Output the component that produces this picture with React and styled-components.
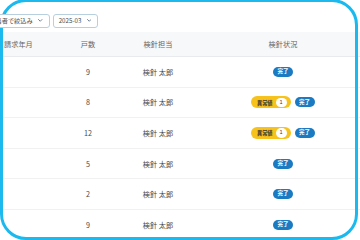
import styled, { createGlobalStyle } from 'styled-components';

const GlobalStyle = createGlobalStyle`
  html, body {
    margin: 0;
    padding: 0;
    background: #fff;
    overflow: hidden;
  }
  body {
    font-family: 'Noto Sans CJK JP', 'Noto Sans', sans-serif;
  }
`;

const Page = styled.div`
  position: relative;
  width: 360px;
  height: 240px;
  overflow: hidden;
  background: #fff;
`;

// cyan rounded frame drawn over the cropped table
const Frame = styled.div`
  position: absolute;
  left: 0;
  top: -1px;
  width: 358px;
  height: 241px;
  box-sizing: border-box;
  border: 3px solid #1cb9ef;
  border-radius: 26px;
  pointer-events: none;
  z-index: 1;
`;

const Toolbar = styled.div`
  position: relative;
  z-index: 2;
  display: flex;
  gap: 3px;
  height: 32px;
  box-sizing: border-box;
  padding-top: 14px;
  margin-left: -29px;
`;

const FilterButton = styled.button`
  display: flex;
  align-items: center;
  gap: 5.5px;
  height: 13.5px;
  box-sizing: border-box;
  padding: 0 6px 0 5px;
  border: 1px solid #b8cfdf;
  border-radius: 3px;
  background: #fff;
  color: #4a4a4a;
  font-family: 'Noto Sans CJK JP', sans-serif;
  font-size: 6.2px;
  line-height: 1;
  white-space: nowrap;
`;

const Chevron = () => (
  <svg width="4.5" height="3" viewBox="0 0 9 6">
    <polyline points="1,1 4.5,4.5 8,1" fill="none" stroke="#51667a" strokeWidth="1.6" strokeLinecap="round" strokeLinejoin="round" />
  </svg>
);

const Table = styled.div`
  width: 360px;
`;

const HeadRow = styled.div`
  display: grid;
  grid-template-columns: 66px 44px 96px 1fr;
  align-items: center;
  height: 25px;
  box-sizing: border-box;
  background: #f7f8fa;
  border-bottom: 1px solid #e8eaed;
  color: #666;
  font-size: 7.2px;
`;

const BodyRow = styled.div`
  display: grid;
  grid-template-columns: 66px 44px 96px 1fr;
  align-items: center;
  height: 30.6px;
  box-sizing: border-box;
  border-bottom: 1px solid #f1f1f1;
  color: #474747;
  font-size: 7.2px;
`;

const Cell = styled.div`
  display: flex;
  align-items: center;
  justify-content: ${p => (p.$left ? 'flex-start' : 'center')};
  gap: 3.5px;
  padding-left: ${p => (p.$left ? '4px' : '0')};
  white-space: nowrap;
`;

const DoneBadge = styled.span`
  display: inline-flex;
  align-items: center;
  justify-content: center;
  height: 10px;
  padding: 0 4.5px;
  border-radius: 5px;
  background: #1a7bc3;
  color: #fff;
  font-size: 5.5px;
  font-weight: 700;
  line-height: 1;
`;

const AlertBadge = styled.span`
  display: inline-flex;
  align-items: center;
  gap: 3px;
  height: 12px;
  padding: 0 4.5px 0 5.5px;
  border-radius: 6px;
  background: #f7c21c;
  color: #333;
  font-size: 5.2px;
  font-weight: 700;
  line-height: 1;
`;

const Count = styled.span`
  display: inline-flex;
  align-items: center;
  justify-content: center;
  width: 11px;
  height: 9.5px;
  border-radius: 5px;
  background: #fff;
  color: #333;
  font-size: 5.6px;
  font-weight: 400;
`;

const rows = [
  { count: 9, alert: 0 },
  { count: 8, alert: 1 },
  { count: 12, alert: 1 },
  { count: 5, alert: 0 },
  { count: 2, alert: 0 },
  { count: 9, alert: 0 },
];

export default function App() {
  return (
    <Page>
      <GlobalStyle />
      <Toolbar>
        <FilterButton>
          検針担当者で絞込み
          <Chevron />
        </FilterButton>
        <FilterButton>
          2025-03
          <Chevron />
        </FilterButton>
      </Toolbar>
      <Table>
        <HeadRow>
          <Cell $left>請求年月</Cell>
          <Cell>戸数</Cell>
          <Cell>検針担当</Cell>
          <Cell>検針状況</Cell>
        </HeadRow>
        {rows.map((r, i) => (
          <BodyRow key={i}>
            <Cell $left />
            <Cell>{r.count}</Cell>
            <Cell>検針 太郎</Cell>
            <Cell>
              {r.alert > 0 && (
                <AlertBadge>
                  異常値
                  <Count>{r.alert}</Count>
                </AlertBadge>
              )}
              <DoneBadge>完了</DoneBadge>
            </Cell>
          </BodyRow>
        ))}
      </Table>
      <Frame />
    </Page>
  );
}
